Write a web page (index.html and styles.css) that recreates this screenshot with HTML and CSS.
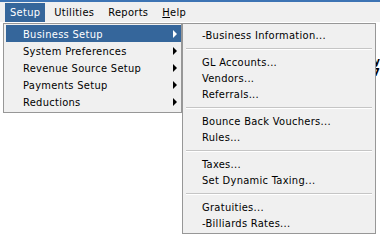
FILE: index.html
```html
<!DOCTYPE html>
<html lang="en">
<head>
  <meta charset="UTF-8">
  <title>Setup Menu</title>
  <link rel="stylesheet" href="styles.css">
</head>
<body>

  <div class="titlebar"></div>

  <div class="menubar">
    <span class="bar-item active">Setup</span>
    <span class="bar-item">Utilities</span>
    <span class="bar-item">Reports</span>
    <span class="bar-item"><u>H</u>elp</span>
  </div>

  <div class="content">
    <div class="peek">y</div>
    <div class="peek">7</div>
  </div>

  <div class="menu main-menu">
    <div class="item selected">Business Setup<i class="arrow"></i></div>
    <div class="item">System Preferences<i class="arrow"></i></div>
    <div class="item">Revenue Source Setup<i class="arrow"></i></div>
    <div class="item">Payments Setup<i class="arrow"></i></div>
    <div class="item">Reductions<i class="arrow"></i></div>
  </div>

  <div class="menu sub-menu">
    <div class="item">-Business Information...</div>
    <div class="sep"></div>
    <div class="item">GL Accounts...</div>
    <div class="item">Vendors...</div>
    <div class="item">Referrals...</div>
    <div class="sep"></div>
    <div class="item">Bounce Back Vouchers...</div>
    <div class="item">Rules...</div>
    <div class="sep"></div>
    <div class="item">Taxes...</div>
    <div class="item">Set Dynamic Taxing...</div>
    <div class="sep"></div>
    <div class="item">Gratuities...</div>
    <div class="item">-Billiards Rates...</div>
  </div>

</body>
</html>
```

FILE: styles.css
```css
body {
  margin: 0;
  font-family: "DejaVu Sans Condensed", "DejaVu Sans", sans-serif;
  font-size: 11px;
  letter-spacing: 0.3px;
  color: #000;
  background: #fff;
  width: 380px;
  height: 246px;
  overflow: hidden;
  position: relative;
}
.titlebar {
  height: 2px;
  background: #3d74b4;
}
.menubar {
  display: flex;
  height: 20px;
  background: #f0f0f0;
  padding-left: 5px;
  padding-top: 1px;
  box-sizing: border-box;
}
.bar-item {
  padding: 0 5px;
  line-height: 19px;
}
.bar-item + .bar-item {
  margin-left: 4px;
}
.bar-item.active {
  background: #35669b;
  color: #fff;
}
.content {
  display: flex;
  flex-direction: column;
  align-items: flex-end;
  padding-top: 34px;
}
.peek {
  font-weight: bold;
  line-height: 11px;
  letter-spacing: 0;
}
.menu {
  position: absolute;
  top: 23px;
  background: #f0f0f0;
  border: 1px solid #979797;
  box-sizing: border-box;
}
.main-menu {
  left: 3px;
  width: 179px;
  padding: 1px 0 2px 2px;
}
.sub-menu {
  left: 182px;
  width: 194px;
  padding: 4px 2px 1px 2px;
}
.item {
  position: relative;
  height: 17px;
  line-height: 19px;
  padding-left: 17px;
  white-space: nowrap;
}
.sub-menu .item {
  height: 16px;
  line-height: 16px;
}
.item.selected {
  background: #35669b;
  color: #fff;
}
.arrow {
  position: absolute;
  left: 167px;
  top: 5px;
  width: 0;
  height: 0;
  border-left: 4px solid #000;
  border-top: 4px solid transparent;
  border-bottom: 4px solid transparent;
}
.selected .arrow {
  border-left-color: #fff;
}
.sep {
  height: 1px;
  margin: 4px 1px 5px 1px;
  background: #c5c5c5;
  border-bottom: 1px solid #fff;
}
```
